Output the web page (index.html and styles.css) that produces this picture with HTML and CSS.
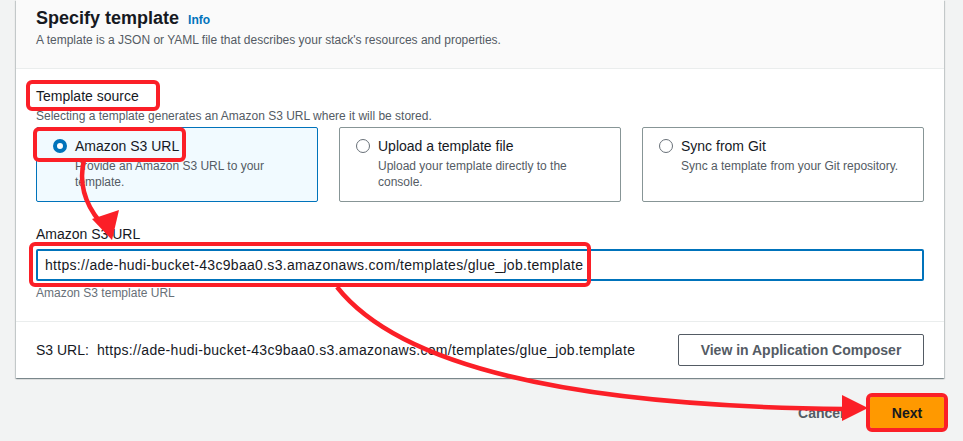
FILE: index.html
```html
<!DOCTYPE html>
<html>
<head>
<meta charset="utf-8">
<link rel="stylesheet" href="styles.css">
</head>
<body>
<div class="page">
  <div class="card">
    <div class="card-header">
      <h2 class="title">Specify template <a class="info">Info</a></h2>
      <p class="desc">A template is a JSON or YAML file that describes your stack's resources and properties.</p>
    </div>
    <div class="card-body">
      <div class="field">
        <div class="label">Template source</div>
        <div class="hint">Selecting a template generates an Amazon S3 URL where it will be stored.</div>
        <div class="tiles">
          <div class="tile selected">
            <div class="tile-head"><span class="radio on"></span><span class="tile-title">Amazon S3 URL</span></div>
            <div class="tile-desc">Provide an Amazon S3 URL to your template.</div>
          </div>
          <div class="tile">
            <div class="tile-head"><span class="radio"></span><span class="tile-title">Upload a template file</span></div>
            <div class="tile-desc">Upload your template directly to the console.</div>
          </div>
          <div class="tile">
            <div class="tile-head"><span class="radio"></span><span class="tile-title">Sync from Git</span></div>
            <div class="tile-desc">Sync a template from your Git repository.</div>
          </div>
        </div>
      </div>
      <div class="field url-field">
        <div class="label">Amazon S3 URL</div>
        <div class="input url">https://ade-hudi-bucket-43c9baa0.s3.amazonaws.com/templates/glue_job.template</div>
        <div class="constraint">Amazon S3 template URL</div>
      </div>
    </div>
    <div class="card-footer">
      <div class="s3url"><span class="s3label">S3 URL:</span><span class="url">https://ade-hudi-bucket-43c9baa0.s3.amazonaws.com/templates/glue_job.template</span></div>
      <button class="btn">View in Application Composer</button>
    </div>
  </div>
  <div class="actions">
    <button class="link-btn">Cancel</button>
    <button class="primary">Next</button>
  </div>
</div>
<svg class="annot" width="963" height="441" viewBox="0 0 963 441">
  <g fill="none" stroke="#fb1f27" stroke-width="4">
    <rect x="28" y="82" width="130" height="27" rx="4"/>
    <rect x="35" y="129" width="149" height="31" rx="4"/>
    <rect x="31" y="244" width="558" height="41" rx="4"/>
    <rect x="868" y="395" width="78" height="35" rx="4"/>
    <path d="M84 160 C 78 185, 86 205, 100 222" stroke-width="4.5"/>
    <path d="M337 287 Q 430 405 845 409" stroke-width="4.5"/>
  </g>
  <g fill="#fb1f27">
    <polygon points="92,219 119,210 112,240"/>
    <polygon points="842,395 842,421 868,408"/>
  </g>
</svg>
</body>
</html>
```
FILE: styles.css
```css
* { box-sizing: border-box; }
html, body { margin: 0; padding: 0; }
body {
  background: #f2f3f3;
  font-family: "Liberation Sans", Arial, sans-serif;
  color: #16191f;
  width: 963px;
  height: 441px;
  overflow: hidden;
  position: relative;
}
.page { padding: 0 19px 0 16px; }
.card {
  background: #fff;
  box-shadow: 0 1px 1px 0 rgba(0,28,36,.3), 1px 1px 1px 0 rgba(0,28,36,.15), -1px 1px 1px 0 rgba(0,28,36,.15);
}
.card-header {
  background: #fafafa;
  border-bottom: 1px solid #eaeded;
  padding: 7px 20px 0;
  height: 69px;
}
.title {
  margin: 0;
  font-size: 18px;
  line-height: 22px;
  font-weight: 700;
}
.info {
  font-size: 12px;
  font-weight: 700;
  color: #0073bb;
  margin-left: 4px;
}
.desc {
  margin: 1px 0 0;
  font-size: 12px;
  line-height: 16px;
  color: #545b64;
}
.card-body { padding: 16px 20px 20px; }
.label { font-size: 14px; line-height: 22px; }
.hint { font-size: 12px; line-height: 16px; color: #545b64; margin-top: 1px; }
.tiles {
  display: grid;
  grid-template-columns: repeat(3, 282px);
  gap: 21px;
  margin-top: 3px;
}
.tile {
  border: 1px solid #879596;
  border-radius: 2px;
  height: 75px;
  padding: 7px 16px 0;
}
.tile.selected { border-color: #0073bb; background: #f1faff; }
.tile-head { display: flex; align-items: center; gap: 8px; }
.radio {
  width: 14px; height: 14px;
  border-radius: 50%;
  border: 1px solid #687078;
  background: #fff;
  flex: none;
}
.radio.on { border: 4px solid #0073bb; }
.tile-title { font-size: 14px; line-height: 22px; }
.tile-desc {
  font-size: 12px; line-height: 16px; color: #545b64;
  padding-left: 22px;
  margin-top: 1px;
}
.url-field { margin-top: 21px; }
.url { letter-spacing: 0.3px; }
.input {
  margin-top: 4px;
  height: 32px;
  border: 2px solid #0073bb;
  border-radius: 2px;
  padding: 0 7px;
  font-size: 14px;
  line-height: 28px;
}
.constraint { font-size: 12px; line-height: 16px; color: #687078; margin-top: 4px; }
.card-footer {
  border-top: 1px solid #eaeded;
  padding: 12px 20px 12px;
  display: flex;
  justify-content: space-between;
  align-items: center;
  font-size: 14px;
}
.s3label { margin-right: 8px; }
.btn {
  height: 32px;
  padding: 0 19px;
  border: 1px solid #545b64;
  border-radius: 2px;
  background: #fff;
  color: #545b64;
  font: 700 14px "Liberation Sans", Arial, sans-serif;
  width: 246px;
}
.actions {
  display: flex;
  justify-content: flex-end;
  align-items: center;
  gap: 26px;
  margin-top: 19px;
}
.link-btn {
  border: 0; background: none; padding: 0;
  font: 700 14px "Liberation Sans", Arial, sans-serif;
  color: #545b64;
}
.primary {
  width: 74px; height: 31px;
  border: 0;
  border-radius: 2px;
  background: #ff9900;
  color: #16191f;
  font: 700 14px "Liberation Sans", Arial, sans-serif;
}
.annot { position: absolute; left: 0; top: 0; pointer-events: none; }
```
